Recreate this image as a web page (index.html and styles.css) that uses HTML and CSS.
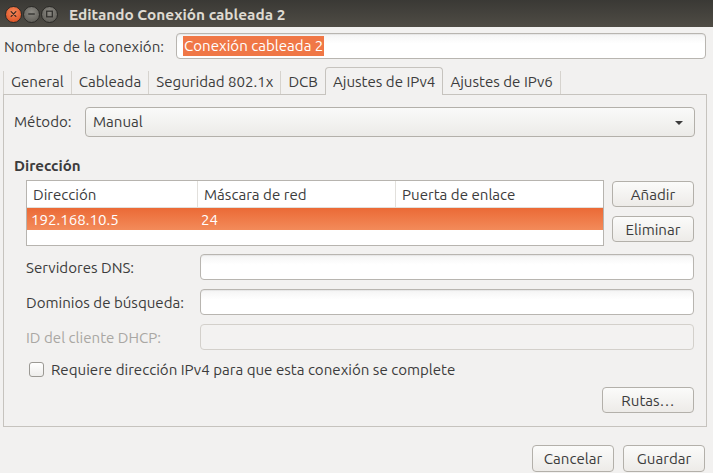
FILE: index.html
```html
<!DOCTYPE html>
<html lang="es">
<head>
<meta charset="utf-8">
<title>Editando Conexión cableada 2</title>
<link rel="stylesheet" href="styles.css">
</head>
<body>
<div class="window">
  <header class="titlebar">
    <div class="wm-buttons">
      <span class="wm-btn wm-close"><svg width="16" height="16" viewBox="0 0 16 16"><path d="M5.5 5.5 L10.5 10.5 M10.5 5.5 L5.5 10.5" stroke="#3a2a22" stroke-width="1.4" stroke-linecap="round"/></svg></span>
      <span class="wm-btn wm-grey"><svg width="16" height="16" viewBox="0 0 16 16"><path d="M4.5 8 H11.5" stroke="#2f2e2b" stroke-width="1.4"/></svg></span>
      <span class="wm-btn wm-grey"><svg width="16" height="16" viewBox="0 0 16 16"><rect x="5" y="5" width="6" height="6" fill="none" stroke="#2f2e2b" stroke-width="1.3"/></svg></span>
    </div>
    <div class="title">Editando Conexión cableada 2</div>
  </header>

  <div class="name-row">
    <label class="name-label">Nombre de la conexión:</label>
    <div class="entry name-entry"><span class="selected">Conexión cableada 2</span></div>
  </div>

  <nav class="tabs">
    <span class="tab first">General</span>
    <span class="tab">Cableada</span>
    <span class="tab">Seguridad 802.1x</span>
    <span class="tab">DCB</span>
    <span class="tab active">Ajustes de IPv4</span>
    <span class="tab last">Ajustes de IPv6</span>
  </nav>

  <section class="panel">
    <div class="method-row">
      <span class="method-label">Método:</span>
      <div class="combo">
        <span>Manual</span>
        <svg class="arrow" width="10" height="6" viewBox="0 0 10 6"><path d="M1 1 H9 L5 5 Z" fill="#3c3c3c"/></svg>
      </div>
    </div>

    <h3 class="section-title">Dirección</h3>

    <div class="address">
      <div class="table">
        <div class="trow thead">
          <span class="c1">Dirección</span>
          <span class="c2">Máscara de red</span>
          <span class="c3">Puerta de enlace</span>
        </div>
        <div class="trow tsel">
          <span class="c1">192.168.10.5</span>
          <span class="c2">24</span>
          <span class="c3"></span>
        </div>
        <div class="tempty"></div>
      </div>
      <div class="addr-buttons">
        <button class="btn side-btn">Añadir</button>
        <button class="btn side-btn">Eliminar</button>
      </div>
    </div>

    <div class="form-grid">
      <span class="flabel">Servidores DNS:</span>
      <div class="entry"></div>
      <span class="flabel">Dominios de búsqueda:</span>
      <div class="entry"></div>
      <span class="flabel disabled">ID del cliente DHCP:</span>
      <div class="entry entry-disabled"></div>
    </div>

    <div class="check-row">
      <span class="checkbox"></span>
      <span>Requiere dirección IPv4 para que esta conexión se complete</span>
    </div>

    <div class="routes-row">
      <button class="btn routes-btn">Rutas…</button>
    </div>
  </section>

  <footer class="actions">
    <button class="btn action-btn">Cancelar</button>
    <button class="btn action-btn">Guardar</button>
  </footer>
</div>
</body>
</html>
```
FILE: styles.css
```css
* { box-sizing: border-box; }
html, body {
  margin: 0;
  padding: 0;
}
body {
  width: 713px;
  height: 473px;
  overflow: hidden;
  background: #f2f1f0;
  font-family: "Ubuntu", "Noto Sans", "DejaVu Sans", sans-serif;
  font-size: 15.1px;
  color: #3c3c3c;
}
.window {
  display: flex;
  flex-direction: column;
  height: 473px;
}

/* title bar */
.titlebar {
  height: 27px;
  flex: none;
  display: flex;
  align-items: center;
  background: linear-gradient(#3a3935, #4f4c45);
  padding-left: 5px;
}
.wm-buttons {
  display: flex;
  gap: 1px;
  margin-top: 1px;
}
.wm-btn {
  width: 17px;
  height: 17px;
  border-radius: 50%;
  display: flex;
  align-items: center;
  justify-content: center;
  border: 1px solid #2b2a27;
}
.wm-close {
  background: radial-gradient(circle at 50% 35%, #f78a5c, #e0582a 75%);
}
.wm-grey {
  background: radial-gradient(circle at 50% 35%, #8c8a84, #64625c 75%);
}
.title {
  margin-left: 11px;
  font-weight: bold;
  font-size: 15.4px;
  color: #dfdbd2;
  margin-top: 1px;
}

/* name row */
.name-row {
  display: flex;
  align-items: center;
  margin-top: 6px;
  padding: 0 7px 0 4px;
}
.name-label {
  width: 172px;
  flex: none;
}
.entry {
  height: 26px;
  border: 1px solid #b8b5b0;
  border-radius: 4px;
  background: linear-gradient(#f4f4f4, #ffffff 40%);
  box-shadow: inset 0 1px 1px rgba(0,0,0,0.06);
}
.name-entry {
  flex: 1;
  display: flex;
  align-items: center;
  padding-left: 6px;
}
.selected {
  background: #f07746;
  color: #ffffff;
  padding: 1px 1px 2px;
  line-height: 17px;
}

/* tabs */
.tabs {
  display: flex;
  margin-top: 8px;
  padding-left: 3px;
  height: 27px;
  position: relative;
  z-index: 1;
}
.tab {
  display: flex;
  align-items: center;
  padding: 0 7px 3px;
  border-left: 1px solid #d6d3ce;
  margin-top: 4px;
  height: 23px;
}
.tab.first { border-left-color: #d6d3ce; }
.tab.last { border-right: 1px solid #d6d3ce; }
.tab.active {
  margin-top: 0;
  height: 28px;
  padding: 0 7px 1px;
  border: 1px solid #c6c3be;
  border-bottom: none;
  border-radius: 4px 4px 0 0;
  background: #f2f1f0;
}
.tab.active + .tab { border-left: none; }

/* panel */
.panel {
  margin: 0 6px 0 3px;
  border: 1px solid #c6c3be;
  display: flex;
  flex-direction: column;
  padding: 12px 11px 12px 10px;
  height: 333px;
  flex: none;
}
.method-row {
  display: flex;
  align-items: center;
}
.method-label {
  width: 71px;
  flex: none;
  padding-bottom: 2px;
}
.combo {
  flex: 1;
  height: 30px;
  border: 1px solid #b3b0aa;
  border-radius: 4px;
  background: linear-gradient(#fafaf9, #ecebe8);
  display: flex;
  align-items: center;
  justify-content: space-between;
  padding: 0 10px 2px 7px;
}
.arrow { margin-top: 3px; }

.section-title {
  margin: 20px 0 0;
  height: 18px;
  line-height: 18px;
  font-size: 15.1px;
  font-weight: bold;
}

.address {
  display: flex;
  gap: 8px;
  margin: 5px 1px 0 12px;
}
.table {
  flex: 1;
  border: 1px solid #b7b4af;
  background: #ffffff;
  height: 66px;
}
.trow {
  display: flex;
}
.thead {
  height: 27px;
  border-bottom: 1px solid #e2e0dc;
}
.thead span {
  display: flex;
  align-items: center;
  padding-left: 6px;
}
.thead .c1, .thead .c2 { border-right: 1px solid #e2e0dc; }
.c1 { width: 171px; }
.c2 { width: 198px; }
.c3 { flex: 1; }
.tsel {
  height: 22px;
  background: linear-gradient(#eb6a36, #f38b5a);
  color: #ffffff;
}
.tsel span {
  display: flex;
  align-items: center;
  padding-left: 4px;
}
.tsel .c1 { width: 171px; }
.tsel .c2 { width: 198px; padding-left: 3px; }

.addr-buttons {
  display: flex;
  flex-direction: column;
  gap: 9px;
  padding-top: 1px;
}
.btn {
  font: inherit;
  color: #3c3c3c;
  border: 1px solid #b3b0aa;
  border-radius: 4px;
  background: linear-gradient(#fbfbfa, #edebe8);
  padding: 0;
  margin: 0;
}
.side-btn {
  width: 82px;
  height: 26px;
}

.form-grid {
  display: grid;
  grid-template-columns: 174px 1fr;
  row-gap: 9px;
  align-items: center;
  margin: 8px 1px 0 12px;
}
.flabel.disabled { color: #a9a7a3; }
.entry-disabled {
  border-color: #d3d0cb;
  background: #f3f2f1;
  box-shadow: none;
}

.check-row {
  display: flex;
  align-items: center;
  gap: 7px;
  margin: 12px 0 0 15px;
  height: 15px;
}
.checkbox {
  width: 15px;
  height: 15px;
  border: 1px solid #9b9994;
  border-radius: 3px;
  background: linear-gradient(#ffffff, #eeedeb);
  flex: none;
}

.routes-row {
  display: flex;
  justify-content: flex-end;
  margin-top: 10px;
  padding-right: 1px;
}
.routes-btn {
  width: 92px;
  height: 26px;
}

.actions {
  display: flex;
  justify-content: flex-end;
  gap: 9px;
  margin-top: 18px;
  padding-right: 8px;
}
.action-btn {
  width: 82px;
  height: 27px;
}
```
